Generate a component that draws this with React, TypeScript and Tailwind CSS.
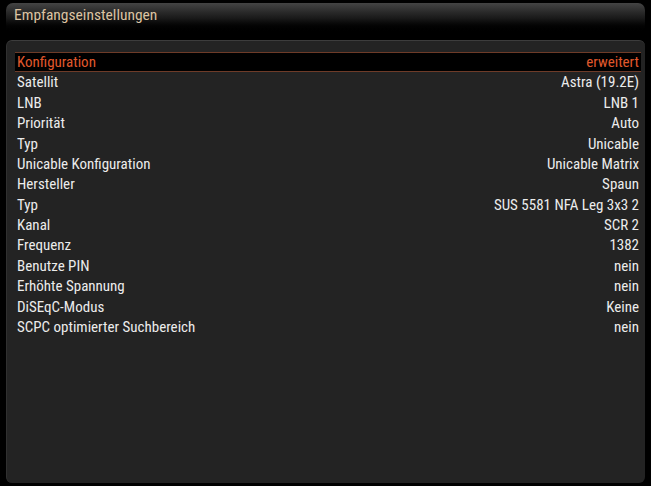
import React from "react";

const rows: [string, string][] = [
  ["Konfiguration", "erweitert"],
  ["Satellit", "Astra (19.2E)"],
  ["LNB", "LNB 1"],
  ["Priorität", "Auto"],
  ["Typ", "Unicable"],
  ["Unicable Konfiguration", "Unicable Matrix"],
  ["Hersteller", "Spaun"],
  ["Typ", "SUS 5581 NFA Leg 3x3 2"],
  ["Kanal", "SCR 2"],
  ["Frequenz", "1382"],
  ["Benutze PIN", "nein"],
  ["Erhöhte Spannung", "nein"],
  ["DiSEqC-Modus", "Keine"],
  ["SCPC optimierter Suchbereich", "nein"],
];

export default function App() {
  return (
    <div
      className="w-[651px] h-[486px] bg-black flex flex-col px-[6px] pt-[3px] pb-[3px] gap-[7px] overflow-hidden"
      style={{ fontFamily: '"Roboto Condensed", "DejaVu Sans Condensed", Roboto, sans-serif' }}
    >
      <div className="h-[30px] shrink-0 rounded-t-[7px] bg-gradient-to-b from-[#444444] via-[#1a1a1a] to-black pl-[8px] pt-0">
        <span className="text-[15.5px] leading-[22px] text-[#dcc3a2]">Empfangseinstellungen</span>
      </div>
      <div className="flex-1 rounded-[6px] bg-[#232323] border-t border-t-[#3c3c3c] border-l border-l-[#303030] pt-[11px] pl-[8px] pr-[4px]">
        {rows.map(([l, v], i) => (
          <div
            key={i}
            className={
              i === 0
                ? "h-[20.4px] flex items-center justify-between px-[2px] bg-black border-y border-[#6e3b28] text-[#e0582c] text-[15px]"
                : "h-[20.4px] flex items-center justify-between px-[2px] text-[#ececec] text-[15px]"
            }
          >
            <span>{l}</span>
            <span>{v}</span>
          </div>
        ))}
      </div>
    </div>
  );
}
